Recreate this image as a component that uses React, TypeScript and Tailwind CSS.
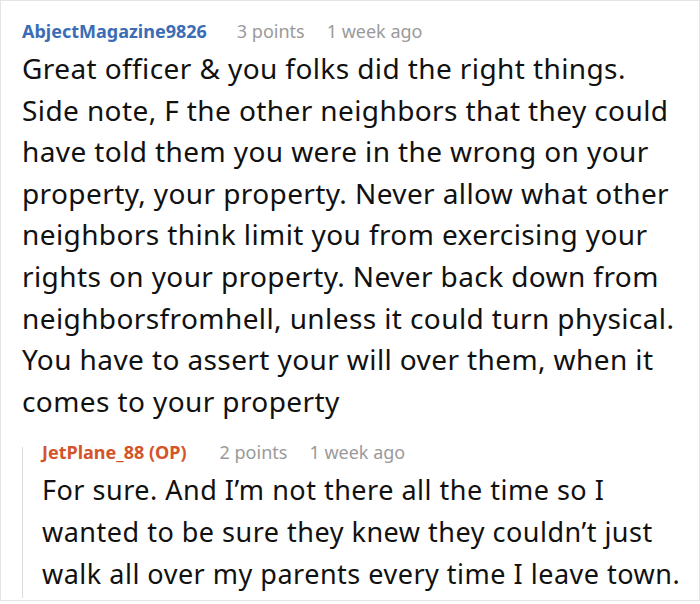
import React from "react";

const topLines = [
  "Great officer & you folks did the right things.",
  "Side note, F the other neighbors that they could",
  "have told them you were in the wrong on your",
  "property, your property. Never allow what other",
  "neighbors think limit you from exercising your",
  "rights on your property. Never back down from",
  "neighborsfromhell, unless it could turn physical.",
  "You have to assert your will over them, when it",
  "comes to your property",
];

const replyLines = [
  "For sure. And I’m not there all the time so I",
  "wanted to be sure they knew they couldn’t just",
  "walk all over my parents every time I leave town.",
];

export default function App() {
  return (
    <div className="w-[700px] h-[604px] bg-white" style={{ fontFamily: '"Noto Sans", "Open Sans", sans-serif' }}>
      <div className="w-[700px] h-[601px] border border-[#e4e4e4] pl-[21px] pr-[4px] pt-[17px]">
        <div className="flex items-baseline text-[18px] leading-[26px]">
          <span className="font-bold text-[#3a6db5]">AbjectMagazine9826</span>
          <span className="ml-[30px] text-[#9a9a9a]">3 points</span>
          <span className="ml-[22px] text-[#9a9a9a]">1 week ago</span>
        </div>
        <p className="mt-[4px] text-[28px] leading-[41.6px] tracking-[0.4px] text-[#111]">
          {topLines.map((l, i) => (
            <span key={i} className="block whitespace-nowrap">{l}</span>
          ))}
        </p>
        <div className="mt-[15px] flex">
          <div className="w-px bg-[#dcdcdc] mt-[10px]" />
          <div className="pl-[19px] pb-[4px]">
            <div className="flex items-baseline text-[18px] leading-[26px] pt-[2px]">
              <span className="font-bold text-[#d4542a]">JetPlane_88 (OP)</span>
              <span className="ml-[33px] text-[#9a9a9a]">2 points</span>
              <span className="ml-[22px] text-[#9a9a9a]">1 week ago</span>
            </div>
            <p className="mt-[4px] text-[27px] leading-[41.6px] tracking-[0.5px] text-[#111]">
              {replyLines.map((l, i) => (
                <span key={i} className="block whitespace-nowrap">{l}</span>
              ))}
            </p>
          </div>
        </div>
      </div>
    </div>
  );
}
